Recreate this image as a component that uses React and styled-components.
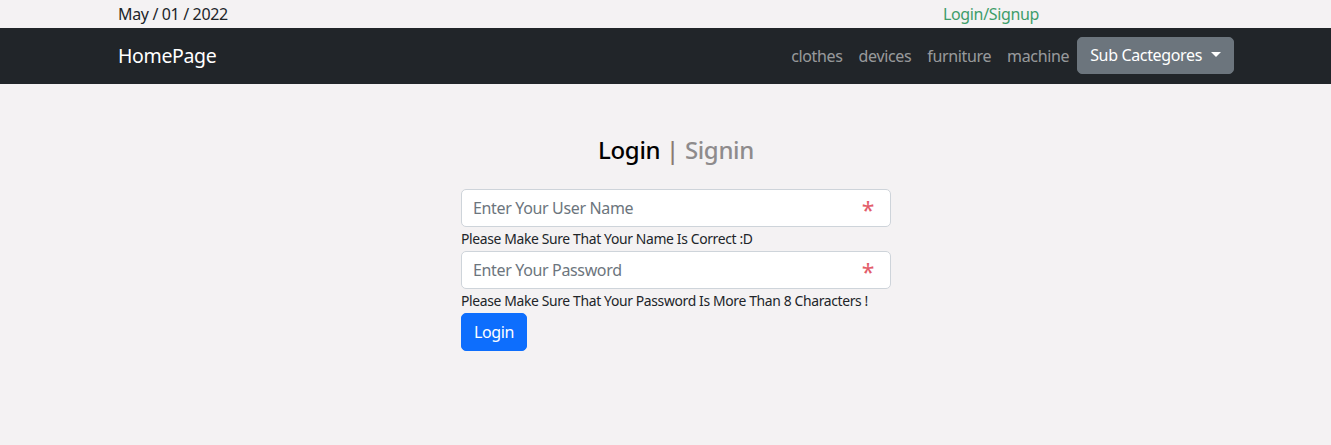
import React from 'react';
import styled, {createGlobalStyle} from "styled-components";

const GlobalStyle = createGlobalStyle`
  body {
    margin: 0;
    background: #f4f2f3;
    font-family: "Segoe UI", "Noto Sans", "Liberation Sans", sans-serif;
    font-size: 16px;
    letter-spacing: -0.022em;
    color: #212529;
  }
  * { box-sizing: border-box; }
`;

const TopBar = styled.div`
  height: 28px;
  display: flex;
  align-items: center;
  padding: 0 97px 0 118px;
`;

const DateText = styled.span`
  font-size: 16px;
  line-height: 24px;
  width: 825px;
`;

const AuthLink = styled.a`
  font-size: 16px;
  line-height: 24px;
  color: #3e9d6a;
  text-decoration: none;
`;

const Navbar = styled.nav`
  height: 56px;
  background: #212529;
  display: flex;
  align-items: center;
  justify-content: space-between;
  padding: 0 97px 0 118px;
`;

const Brand = styled.a`
  font-size: 19.5px;
  line-height: 30px;
  color: #fff;
  text-decoration: none;
`;

const NavList = styled.div`
  display: flex;
  align-items: center;
  margin-top: -2px;
`;

const NavItem = styled.a`
  font-size: 16px;
  line-height: 24px;
  color: rgba(255, 255, 255, 0.55);
  text-decoration: none;
  padding: 8px;
  margin-top: 2px;
`;

const DropButton = styled.button`
  display: flex;
  align-items: center;
  gap: 9px;
  height: 37px;
  padding: 6px 12px;
  font-family: inherit;
  font-size: 16px;
  letter-spacing: inherit;
  color: #fff;
  background: #6c757d;
  border: 1px solid #6c757d;
  border-radius: 5px;
`;

const Caret = styled.span`
  width: 0;
  height: 0;
  border-top: 5px solid #fff;
  border-left: 5px solid transparent;
  border-right: 5px solid transparent;
  margin-top: -2px;
`;

const Main = styled.main`
  display: flex;
  flex-direction: column;
  align-items: center;
  padding: 48px 97px 0 118px;
`;

const Title = styled.h4`
  margin: 0 0 21px;
  font-size: 24px;
  line-height: 36px;
  font-weight: 500;
  color: #000;
`;

const Bar = styled.span`
  color: #8a7a72;
`;

const Muted = styled.span`
  color: #8e8b8c;
`;

const Form = styled.form`
  width: 430px;
  display: flex;
  flex-direction: column;
  align-items: flex-start;
`;

const Field = styled.div`
  width: 100%;
  height: 38px;
  display: flex;
  align-items: center;
  background: #fff;
  border: 1px solid #ced4da;
  border-radius: 5px;
  padding: 0 12px 0 11px;
`;

const Input = styled.input`
  flex: 1;
  border: none;
  outline: none;
  padding: 0;
  background: transparent;
  font-family: inherit;
  font-size: 16px;
  letter-spacing: inherit;
  color: #212529;
  &::placeholder { color: #6c757d; }
`;

const Required = styled.span`
  color: #e35d6a;
  font-size: 23px;
  line-height: 1;
  margin-top: 5px;
  margin-right: 4px;
`;

const Hint = styled.small`
  font-size: 13.9px;
  line-height: 24px;
  white-space: nowrap;
  color: #212529;
`;

const SubmitButton = styled.button`
  height: 38px;
  padding: 6px 12px;
  font-family: inherit;
  font-size: 16px;
  letter-spacing: inherit;
  color: #fff;
  background: #0d6efd;
  border: 1px solid #0d6efd;
  border-radius: 5px;
`;

const App = () => {
    return (
        <>
            <GlobalStyle/>
            <TopBar>
                <DateText>May / 01 / 2022</DateText>
                <AuthLink href="#">Login/Signup</AuthLink>
            </TopBar>
            <Navbar>
                <Brand href="#">HomePage</Brand>
                <NavList>
                    <NavItem href="#">clothes</NavItem>
                    <NavItem href="#">devices</NavItem>
                    <NavItem href="#">furniture</NavItem>
                    <NavItem href="#">machine</NavItem>
                    <DropButton type="button">Sub Cactegores <Caret/></DropButton>
                </NavList>
            </Navbar>
            <Main>
                <Title>Login <Bar>|</Bar> <Muted>Signin</Muted></Title>
                <Form>
                    <Field>
                        <Input placeholder="Enter Your User Name"/>
                        <Required>*</Required>
                    </Field>
                    <Hint>Please Make Sure That Your Name Is Correct :D</Hint>
                    <Field>
                        <Input type="password" placeholder="Enter Your Password"/>
                        <Required>*</Required>
                    </Field>
                    <Hint>Please Make Sure That Your Password Is More Than 8 Characters !</Hint>
                    <SubmitButton type="button">Login</SubmitButton>
                </Form>
            </Main>
        </>
    );
};

export default App;
